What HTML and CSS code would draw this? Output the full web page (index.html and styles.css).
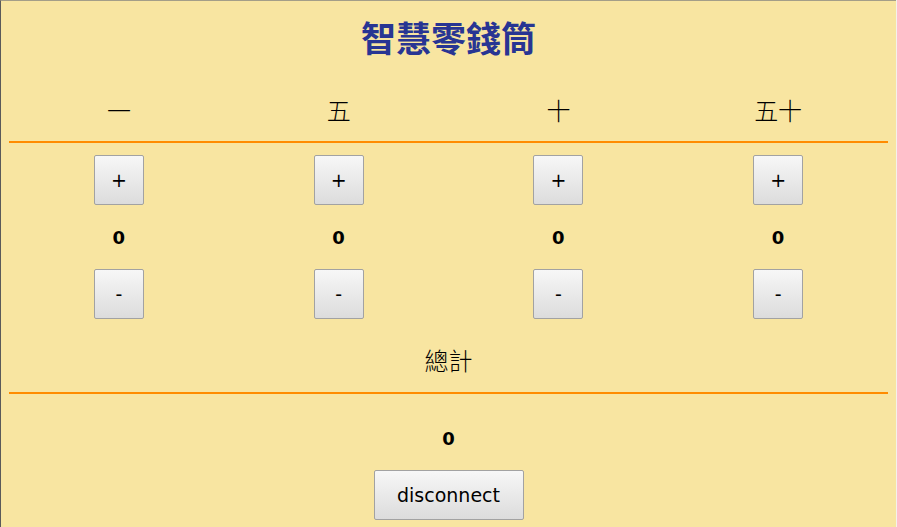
FILE: index.html
```html
<!DOCTYPE html>
<html lang="zh-Hant">
<head>
<meta charset="utf-8">
<title>智慧零錢筒</title>
<link rel="stylesheet" href="styles.css">
</head>
<body>
<div class="app">
  <h1 class="title">智慧零錢筒</h1>
  <div class="grid heads">
    <div>一</div>
    <div>五</div>
    <div>十</div>
    <div>五十</div>
  </div>
  <div class="rule"></div>
  <div class="grid btns plus">
    <div><button class="btn sq">+</button></div>
    <div><button class="btn sq">+</button></div>
    <div><button class="btn sq">+</button></div>
    <div><button class="btn sq">+</button></div>
  </div>
  <div class="grid nums">
    <div>0</div>
    <div>0</div>
    <div>0</div>
    <div>0</div>
  </div>
  <div class="grid btns minus">
    <div><button class="btn sq">-</button></div>
    <div><button class="btn sq">-</button></div>
    <div><button class="btn sq">-</button></div>
    <div><button class="btn sq">-</button></div>
  </div>
  <div class="total-label">總計</div>
  <div class="rule"></div>
  <div class="total">0</div>
  <div class="footer"><button class="btn wide">disconnect</button></div>
</div>
</body>
</html>
```
FILE: styles.css
```css
html, body {
  margin: 0;
  padding: 0;
  background: #f4f2ec;
}
.app {
  width: 879px;
  height: 509px;
  padding: 17px 8px 0 8px;
  box-sizing: content-box;
  background: #f8e5a1;
  border-top: 1px solid #a49e88;
  border-left: 1px solid #5a5a5a;
  font-family: "DejaVu Sans", "Noto Sans CJK TC", sans-serif;
  color: #000;
  overflow: hidden;
}
.title {
  margin: 0;
  height: 40px;
  line-height: 38px;
  text-align: center;
  font-family: "Noto Sans CJK TC", sans-serif;
  font-size: 35px;
  font-weight: bold;
  color: #283593;
}
.grid {
  display: grid;
  grid-template-columns: repeat(4, 1fr);
  text-align: center;
}
.heads {
  margin-top: 37px;
  height: 30px;
  line-height: 30px;
  font-family: "Noto Sans CJK TC", sans-serif;
  font-size: 24px;
  font-weight: 300;
}
.rule {
  height: 2px;
  background: #ff8c00;
}
.heads + .rule {
  margin-top: 16px;
}
.plus {
  margin-top: 12px;
}
.btns > div {
  display: flex;
  justify-content: center;
}
.btn {
  margin: 0;
  padding: 0;
  border: 1px solid #a2a2a2;
  border-radius: 2px;
  background: linear-gradient(#f7f7f7, #dcdcdc);
  font-family: "DejaVu Sans", sans-serif;
  color: #000;
}
.sq {
  width: 50px;
  height: 50px;
  font-size: 19px;
}
.nums {
  margin-top: 23px;
  height: 20px;
  line-height: 20px;
  font-size: 18px;
  font-weight: bold;
}
.minus {
  margin-top: 21px;
}
.total-label {
  margin-top: 26px;
  height: 30px;
  line-height: 30px;
  text-align: center;
  font-family: "Noto Sans CJK TC", sans-serif;
  font-size: 24px;
  font-weight: 300;
}
.total-label + .rule {
  margin-top: 17px;
}
.total {
  margin-top: 35px;
  height: 20px;
  line-height: 20px;
  text-align: center;
  font-size: 18px;
  font-weight: bold;
}
.footer {
  margin-top: 21px;
  display: flex;
  justify-content: center;
}
.wide {
  width: 150px;
  height: 50px;
  font-size: 19px;
}
```
